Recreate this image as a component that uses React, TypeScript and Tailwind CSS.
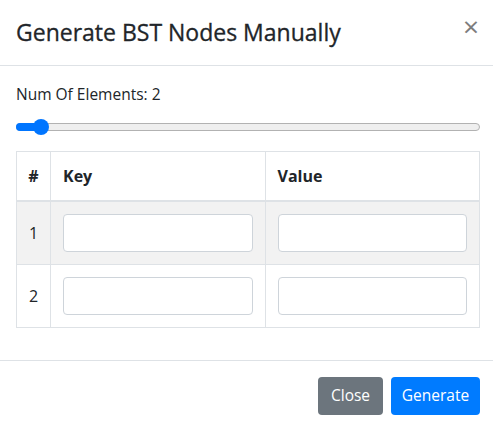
import { useState } from 'react'

export default function App() {
  const [count] = useState(2)
  const rows = Array.from({ length: count }, (_, i) => i + 1)

  return (
    <div className="w-[493px] h-[430px] overflow-hidden bg-white text-[#212529] font-['Segoe_UI','Open_Sans',sans-serif]">
      {/* header */}
      <div className="flex items-start justify-between pl-4 pr-[13px] pt-[17px] pb-[18px] border-b border-[#dee2e6]">
        <h5 className="text-[23px] leading-[30px] font-medium [-webkit-text-stroke:0.3px_#212529]">Generate BST Nodes Manually</h5>
        <button className="text-[#7d7d7d] text-[28px] leading-[24px] font-normal -mt-[3px] mr-[1px]">×</button>
      </div>

      {/* body */}
      <div className="pl-4 pr-[13px] pt-4 pb-4">
        <label className="block text-[15.5px] leading-6">Num Of Elements: {count}</label>
        <div className="relative h-[16px] mt-[13px] mb-[16px] flex items-center">
          <div className="w-full h-2 rounded-full bg-[#efefef] border border-[#b2b2b2]" />
          <div className="absolute left-0 h-2 w-[26px] rounded-l-full bg-[#0075ff]" />
          <div className="absolute left-[17px] w-4 h-4 rounded-full bg-[#0075ff]" />
        </div>

        <table className="w-full table-fixed border-collapse text-[16px] leading-6 mb-4">
          <thead>
            <tr>
              <th className="w-[34px] border border-[#dee2e6] border-b-2 px-0 py-3 font-bold text-center">#</th>
              <th className="border border-[#dee2e6] border-b-2 p-3 font-bold text-left">Key</th>
              <th className="border border-[#dee2e6] border-b-2 p-3 font-bold text-left">Value</th>
            </tr>
          </thead>
          <tbody>
            {rows.map((n) => (
              <tr key={n} className={n % 2 === 1 ? 'bg-[#f2f2f2]' : ''}>
                <td className="border border-[#dee2e6] px-0 py-3 text-center">{n}</td>
                <td className="border border-[#dee2e6] p-3">
                  <input className="block w-full h-[38px] rounded bg-white border border-[#ced4da] px-3" />
                </td>
                <td className="border border-[#dee2e6] p-3">
                  <input className="block w-full h-[38px] rounded bg-white border border-[#ced4da] px-3" />
                </td>
              </tr>
            ))}
          </tbody>
        </table>
      </div>

      {/* footer */}
      <div className="flex justify-end gap-2 border-t border-[#dee2e6] pl-4 pr-[13px] pt-4 pb-4">
        <button className="h-[38px] w-[65px] rounded bg-[#6c757d] text-white text-[15.5px]">Close</button>
        <button className="h-[38px] w-[89px] rounded bg-[#007bff] text-white text-[15.5px]">Generate</button>
      </div>
    </div>
  )
}
